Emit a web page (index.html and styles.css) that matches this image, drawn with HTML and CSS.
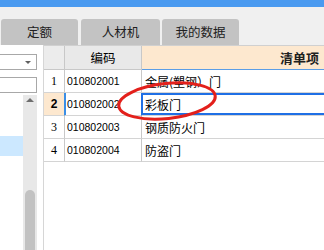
FILE: index.html
```html
<!DOCTYPE html>
<html lang="zh-CN">
<head>
<meta charset="utf-8">
<title>清单项</title>
<link rel="stylesheet" href="styles.css">
</head>
<body>
<div class="app">
  <div class="titlebar"></div>
  <div class="tabbar">
    <div class="tab t1">定额</div>
    <div class="tab t2">人材机</div>
    <div class="tab t3">我的数据</div>
  </div>
  <div class="main">
    <div class="side">
      <div class="select"><span class="caret"></span></div>
      <div class="input"></div>
      <div class="list">
        <div class="items"><div class="item sel"></div></div>
        <div class="scroll"><div class="up"></div><div class="thumb"></div></div>
      </div>
    </div>
    <div class="grid">
      <div class="cell num head"></div>
      <div class="cell code head">编码</div>
      <div class="cell name head hl">清单项</div>

      <div class="cell num">1</div>
      <div class="cell code">010802001</div>
      <div class="cell name">金属(塑钢）门</div>

      <div class="cell num cur">2</div>
      <div class="cell code cur">010802002</div>
      <div class="cell name cur">彩板门</div>

      <div class="cell num">3</div>
      <div class="cell code">010802003</div>
      <div class="cell name">钢质防火门</div>

      <div class="cell num">4</div>
      <div class="cell code">010802004</div>
      <div class="cell name">防盗门</div>
    </div>
  </div>
  <svg class="annot" width="324" height="250" viewBox="0 0 324 250">
    <ellipse cx="167" cy="101" rx="48.5" ry="17.5" transform="rotate(-6 167 101)" fill="none" stroke="#e3201b" stroke-width="3"/>
  </svg>
</div>
</body>
</html>
```
FILE: styles.css
```css
html, body {
  margin: 0;
  padding: 0;
}
body {
  font-family: "Noto Sans CJK SC", "Liberation Sans", sans-serif;
}
.app {
  position: relative;
  width: 324px;
  height: 250px;
  overflow: hidden;
  background: #f0f0f0;
}
.titlebar {
  height: 7px;
  background: #4a9af0;
}
.tabbar {
  height: 38px;
  display: flex;
  align-items: flex-end;
  padding-left: 1px;
  box-sizing: border-box;
}
.tab {
  height: 26px;
  width: 77px;
  background: #c3c3c3;
  border-radius: 3px 3px 0 0;
  display: flex;
  align-items: center;
  justify-content: center;
  font-size: 12.5px;
  color: #202020;
  line-height: 1;
}
.t2 { width: 79px; margin-left: 3px; }
.t3 { margin-left: 2px; }

.main {
  height: 205px;
  display: flex;
  background: #fff;
}
.side {
  width: 43px;
  flex: none;
  border-right: 1px solid #d6d6d6;
  padding-top: 9px;
  box-sizing: content-box;
  display: flex;
  flex-direction: column;
}
.select, .input {
  width: 38px;
  height: 26px;
  margin-left: -1px;
  box-sizing: border-box;
  border: 1px solid #a8a8a8;
  background: #fff;
}
.select {
  display: flex;
  align-items: center;
  justify-content: flex-end;
  padding-right: 5px;
}
.caret {
  width: 0;
  height: 0;
  border-left: 3px solid transparent;
  border-right: 3px solid transparent;
  border-top: 3px solid #606060;
}
.input { margin-top: 7px; }
.list {
  margin-top: 2px;
  flex: 1;
  display: flex;
}
.items {
  width: 23px;
  padding-top: 41px;
}
.item { height: 20px; }
.item.sel { background: #cce8ff; }
.scroll {
  width: 14px;
  background: #e8e8e8;
  display: flex;
  flex-direction: column;
}
.up {
  width: 0;
  height: 0;
  margin: 3px 0 0 3px;
  border-left: 4px solid transparent;
  border-right: 4px solid transparent;
  border-bottom: 4px solid #6e6e6e;
}
.thumb {
  width: 10px;
  height: 60px;
  margin: 88px 0 0 2px;
  background: #c2c2c2;
  border-radius: 5px 5px 0 0;
}

.grid {
  flex: 1;
  display: grid;
  grid-template-columns: 21px 77px 1fr;
  grid-template-rows: 24px repeat(4, 23px);
  align-content: start;
  border-top: 1px solid #d0d0d0;
}
.cell {
  box-sizing: border-box;
  border-bottom: 1px solid #d4d4d4;
  border-right: 1px solid #d4d4d4;
  display: flex;
  align-items: center;
  overflow: hidden;
  white-space: nowrap;
  color: #000;
}
.cell.name { border-right: none; font-size: 12px; padding-left: 3px; }
.cell.num {
  justify-content: center;
  font-family: "Liberation Serif", serif;
  font-size: 12px;
  border-right-color: #c8c8c8;
}
.cell.code {
  font-family: "Liberation Sans", sans-serif;
  font-size: 10.5px;
  padding-left: 2px;
  border-right-color: #c8c8c8;
}
.cell.head {
  background: #e9e9e9;
  border-bottom-color: #c8c8c8;
  font-family: "Noto Sans CJK SC", sans-serif;
  font-size: 12.5px;
  justify-content: center;
  padding: 0;
}
.cell.num.head { background: #ececec; }
.cell.head.hl {
  background: #fde8cf;
  border-bottom-color: #5a9de6;
  justify-content: flex-end;
  padding-right: 5px;
  font-weight: bold;
  font-size: 13px;
  color: #202020;
}
.cell.num.cur {
  background: #fde8cf;
  font-family: "Liberation Sans", sans-serif;
  font-weight: bold;
  border-right-color: #3a8ee6;
}
.cell.code.cur {
  box-shadow: inset 1px 0 0 #3a8ee6;
  border-right-color: #1f6fe5;
}
.cell.name.cur {
  box-shadow: inset 1px 2px 0 #1f6fe5, inset 0 -2px 0 #1f6fe5;
}
.annot {
  position: absolute;
  left: 0;
  top: 0;
  pointer-events: none;
}
```
